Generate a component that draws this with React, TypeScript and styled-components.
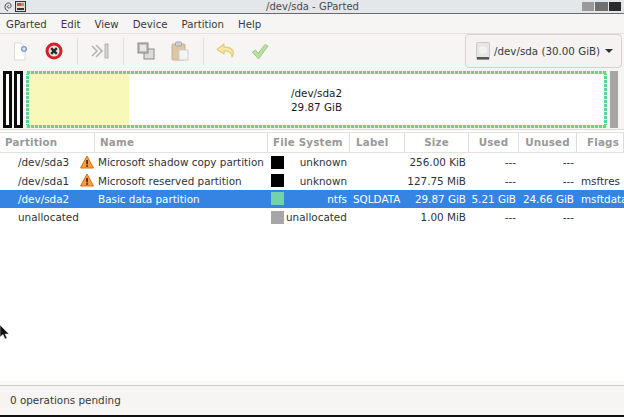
import React from "react";
import styled, { createGlobalStyle } from "styled-components";

const GlobalStyle = createGlobalStyle`
  html, body {
    margin: 0;
    padding: 0;
    background: #fff;
  }
  body {
    font-family: "DejaVu Sans", sans-serif;
    font-size: 10.4px;
    color: #2e3436;
  }
`;

const Win = styled.div`
  position: relative;
  width: 624px;
  height: 417px;
  display: flex;
  flex-direction: column;
  overflow: hidden;
  background: #fff;
  border-bottom: 2px solid #111;
  box-sizing: border-box;
`;

const TitleBar = styled.div`
  height: 13px;
  flex: none;
  display: flex;
  align-items: center;
  padding: 0 3px 0 4px;
  background: #e4e7ea;
  border-bottom: 1px solid #6b6b6b;
  font-size: 10px;
  color: #4a4a4a;
`;

const TitleIcons = styled.div`
  width: 100px;
  display: flex;
  align-items: center;
  gap: 3px;
`;

const Title = styled.div`
  flex: 1;
  text-align: center;
`;

const WinButtons = styled.div`
  width: 100px;
  display: flex;
  justify-content: flex-end;
  gap: 1px;
`;

const WinButton = styled.div<{ $c: string }>`
  width: 12.5px;
  height: 9px;
  background: ${(p) => p.$c};
`;

const MenuBar = styled.div`
  height: 18px;
  flex: none;
  display: flex;
  align-items: center;
  gap: 14px;
  padding: 1px 0 0 6px;
  background: #f6f5f4;
  border-bottom: 1px solid #e2dfdc;
  font-size: 10.2px;
  color: #3a3a3a;
`;

const Toolbar = styled.div`
  height: 34px;
  flex: none;
  display: flex;
  align-items: center;
  padding: 0 2px 0 3px;
  background: #f6f5f4;
  box-sizing: border-box;
`;

const Tool = styled.div`
  width: 34px;
  height: 26px;
  display: flex;
  align-items: center;
  justify-content: center;
`;

const ToolSep = styled.div`
  width: 1px;
  height: 27px;
  margin: 0 5.5px;
  background: #e0dedb;
`;

const DeviceButton = styled.div`
  margin-left: auto;
  width: 157px;
  height: 34px;
  box-sizing: border-box;
  display: flex;
  align-items: center;
  gap: 4px;
  padding-left: 10px;
  background: #f4f3f1;
  border: 1px solid #d5d2ce;
  border-radius: 4px;
  font-size: 10.3px;
  color: #3a3a3a;
  white-space: nowrap;
`;

const Caret = styled.div`
  width: 0;
  height: 0;
  margin-left: 1px;
  border-left: 4px solid transparent;
  border-right: 4px solid transparent;
  border-top: 4px solid #2e3436;
`;

const MapArea = styled.div`
  height: 62px;
  flex: none;
  box-sizing: border-box;
  display: flex;
  gap: 2px;
  padding: 3px 6px 1px 3px;
  background: #f6f5f4;
  border-bottom: 1px solid #dcd9d6;
`;

const TinyPart = styled.div`
  width: 9px;
  box-sizing: border-box;
  border: 3px solid #0c0c0c;
  background: #fff;
`;

const MainPart = styled.div`
  flex: 1;
  margin: 0 1px;
  padding: 3px;
  display: flex;
  background:
    repeating-linear-gradient(90deg, #f0efb0 0 1px, #5fcfaa 1px 4px) top / 100% 3px no-repeat,
    repeating-linear-gradient(90deg, #f0efb0 0 1px, #5fcfaa 1px 4px) bottom / 100% 3px no-repeat,
    repeating-linear-gradient(0deg, #f0efb0 0 1px, #5fcfaa 1px 4px) left / 3px 100% no-repeat,
    repeating-linear-gradient(0deg, #f0efb0 0 1px, #5fcfaa 1px 4px) right / 3px 100% no-repeat;
`;

const MainInner = styled.div<{ $used: number }>`
  flex: 1;
  display: flex;
  flex-direction: column;
  align-items: center;
  justify-content: center;
  line-height: 14px;
  color: #1c1c1c;
  background: linear-gradient(
    90deg,
    #f8f8b8 ${(p) => p.$used}px,
    #fff ${(p) => p.$used}px
  );
`;

const MapScroll = styled.div`
  width: 8px;
  background: #a6a6a6;
`;

const columns = "95px 173px 82px 55px 64px 50px 58px 47px";

const HeaderRow = styled.div`
  flex: none;
  height: 21px;
  margin-top: 2px;
  display: grid;
  grid-template-columns: ${columns};
  box-sizing: border-box;
  border-top: 1px solid #e4e1de;
  border-bottom: 1px solid #e4e1de;
`;

const HeaderCell = styled.div<{ $center?: boolean; $pad?: number }>`
  display: flex;
  align-items: center;
  justify-content: ${(p) => (p.$center ? "center" : "flex-start")};
  padding-left: ${(p) => (p.$center ? 0 : (p.$pad ?? 5))}px;
  padding-bottom: 2px;
  border-right: 1px solid #dedbd8;
  font-weight: bold;
  font-size: 10.3px;
  letter-spacing: 0.2px;
  color: #999;
  white-space: nowrap;
  overflow: hidden;
`;

const Row = styled.div<{ $selected?: boolean }>`
  flex: none;
  height: 18.35px;
  display: grid;
  grid-template-columns: ${columns};
  background: ${(p) => (p.$selected ? "#3584e4" : "#fff")};
  color: ${(p) => (p.$selected ? "#fff" : "#2e3436")};
`;

const Cell = styled.div<{ $right?: boolean; $pad?: number }>`
  display: flex;
  align-items: center;
  justify-content: ${(p) => (p.$right ? "flex-end" : "flex-start")};
  padding-left: ${(p) => (p.$right ? 0 : (p.$pad ?? 0))}px;
  padding-right: ${(p) => (p.$right ? (p.$pad ?? 0) : 0)}px;
  white-space: nowrap;
  overflow: hidden;
`;

const PartitionCell = styled(Cell)`
  position: relative;
  padding-left: 18px;
`;

const WarnSlot = styled.span`
  position: absolute;
  left: 80px;
  top: 2px;
  display: flex;
`;

const FsCell = styled(Cell)`
  padding-left: 3px;
  padding-right: 3px;
  gap: 2px;
`;

const Swatch = styled.div<{ $c: string }>`
  width: 13px;
  height: 13px;
  flex: none;
  background: ${(p) => p.$c};
`;

const FsName = styled.span<{ $left?: boolean }>`
  margin-left: ${(p) => (p.$left ? 0 : "auto")};
`;

const Filler = styled.div`
  flex: 1;
  background: #fff;
  border-bottom: 4px solid #f9f9f8;
`;

const StatusBar = styled.div`
  flex: none;
  height: 30px;
  box-sizing: border-box;
  display: flex;
  align-items: center;
  padding: 0 0 2px 10px;
  background: #f6f5f4;
  border-top: 1px solid #cfccc8;
  color: #3a3a3a;
`;

const Pointer = styled.svg`
  position: absolute;
  left: 0;
  top: 325px;
`;

const Warn = () => (
  <svg width="14" height="14" viewBox="0 0 14 14">
    <path d="M7 1 L13.5 13 H.5 Z" fill="#f5a03c" stroke="#d9701a" strokeLinejoin="round" />
    <rect x="6.2" y="5" width="1.7" height="4.4" fill="#3a3020" />
    <rect x="6.2" y="10.2" width="1.7" height="1.6" fill="#3a3020" />
  </svg>
);

type Part = {
  path: string;
  warn?: boolean;
  name: string;
  color: string;
  fs: string;
  label: string;
  size: string;
  used: string;
  unused: string;
  flags: string;
  selected?: boolean;
};

const parts: Part[] = [
  { path: "/dev/sda3", warn: true, name: "Microsoft shadow copy partition", color: "#000", fs: "unknown", label: "", size: "256.00 KiB", used: "---", unused: "---", flags: "" },
  { path: "/dev/sda1", warn: true, name: "Microsoft reserved partition", color: "#000", fs: "unknown", label: "", size: "127.75 MiB", used: "---", unused: "---", flags: "msftres" },
  { path: "/dev/sda2", name: "Basic data partition", color: "#72d2aa", fs: "ntfs", label: "SQLDATA", size: "29.87 GiB", used: "5.21 GiB", unused: "24.66 GiB", flags: "msftdata", selected: true },
  { path: "unallocated", name: "", color: "#a6a6a6", fs: "unallocated", label: "", size: "1.00 MiB", used: "---", unused: "---", flags: "" },
];

export default function App() {
  return (
    <Win>
      <GlobalStyle />
      <TitleBar>
        <TitleIcons>
          <svg width="8" height="10" viewBox="0 0 8 10">
            <path d="M4 9 C1.5 8 .8 6 1 4.5 C1.3 2 3 1 4.5 1 C6.5 1 7.5 2.8 7 4.5 C6.6 6 4.8 6.4 3.8 5.6 C3 4.8 3.4 3.6 4.6 3.6" fill="none" stroke="#444" strokeWidth="1" />
          </svg>
          <svg width="11" height="11" viewBox="0 0 11 11">
            <rect x=".5" y=".5" width="10" height="10" fill="#ddd" stroke="#333" />
            <rect x="2" y="2" width="4" height="3" fill="#d44" />
            <rect x="6" y="2" width="3" height="3" fill="#7b4" />
            <rect x="2" y="7" width="7" height="2" fill="#333" />
          </svg>
        </TitleIcons>
        <Title>/dev/sda - GParted</Title>
        <WinButtons>
          <WinButton $c="#9a9a9a" />
          <WinButton $c="#6f6f6f" />
          <WinButton $c="#2b2b2b" />
        </WinButtons>
      </TitleBar>

      <MenuBar>
        <span>GParted</span>
        <span>Edit</span>
        <span>View</span>
        <span>Device</span>
        <span>Partition</span>
        <span>Help</span>
      </MenuBar>

      <Toolbar>
        <Tool>
          <svg width="16" height="19" viewBox="0 0 16 19">
            <path d="M2.5 1 H9 L13 5 V18 H2.5 Z" fill="#fff" stroke="#dcdcdc" />
            <circle cx="12" cy="7" r="3" fill="#7d9fd6" />
            <path d="M10.4 7 H13.6 M12 5.4 V8.6" stroke="#fff" strokeWidth="1" />
          </svg>
        </Tool>
        <Tool>
          <svg width="18" height="18" viewBox="0 0 18 18">
            <circle cx="9" cy="9" r="7" fill="#e4e4e4" stroke="#d3202a" strokeWidth="3" />
            <path d="M6.2 6.2 L11.8 11.8 M11.8 6.2 L6.2 11.8" stroke="#2a2a2a" strokeWidth="2.4" />
          </svg>
        </Tool>
        <ToolSep />
        <Tool>
          <svg width="18" height="16" viewBox="0 0 18 16">
            <path d="M1 3 L6 8 L1 13 M5 2 L11 8 L5 14" fill="none" stroke="#b5b5b0" strokeWidth="1.6" />
            <rect x="14" y="1" width="3" height="14" fill="#d6d6d2" stroke="#a5a5a0" strokeWidth=".8" />
          </svg>
        </Tool>
        <ToolSep />
        <Tool>
          <svg width="18" height="18" viewBox="0 0 18 18">
            <rect x="7" y="7" width="10" height="10" fill="#dcdcda" stroke="#8a8a88" />
            <rect x="1" y="1" width="10" height="10" fill="#bdbdbb" stroke="#8a8a88" />
            <rect x="3" y="3" width="6" height="6" fill="#e8e8e6" />
          </svg>
        </Tool>
        <Tool>
          <svg width="18" height="20" viewBox="0 0 18 20">
            <rect x="1" y="3" width="13" height="16" rx="1" fill="#dcc6a6" stroke="#c8b090" />
            <rect x="4.5" y="1" width="6" height="4" rx="1" fill="#d0d0ce" stroke="#aaa" />
            <rect x="8" y="9" width="9" height="10" fill="#f4f4f2" stroke="#cfcfcd" />
          </svg>
        </Tool>
        <ToolSep />
        <Tool>
          <svg width="20" height="16" viewBox="0 0 20 16">
            <path d="M8 1 L1 6.5 L8 11 V8 C12 7.5 15.5 9 16 14 C19 9 17 4 8 4.2 Z" fill="#f5e7a5" stroke="#e0cc78" strokeWidth="1.2" strokeLinejoin="round" />
          </svg>
        </Tool>
        <Tool>
          <svg width="18" height="17" viewBox="0 0 18 17">
            <path d="M1.5 9 L4.5 7 L7 10.5 L14 1.5 L17 3 L7.5 16 Z" fill="#b9e0a0" stroke="#9ccb82" strokeWidth="1" strokeLinejoin="round" />
          </svg>
        </Tool>
        <DeviceButton>
          <svg width="14" height="18" viewBox="0 0 14 18">
            <rect x=".5" y=".5" width="13" height="17" rx="1" fill="#e6e6e4" stroke="#c9c9c7" />
            <circle cx="7" cy="8" r="4" fill="#f2f2f0" />
            <rect x="1" y="15" width="12" height="2.5" fill="#555" />
          </svg>
          <span>/dev/sda (30.00 GiB)</span>
          <Caret />
        </DeviceButton>
      </Toolbar>

      <MapArea>
        <TinyPart />
        <TinyPart />
        <MainPart>
          <MainInner $used={100}>
            <div>/dev/sda2</div>
            <div>29.87 GiB</div>
          </MainInner>
        </MainPart>
        <MapScroll />
      </MapArea>

      <HeaderRow>
        <HeaderCell>Partition</HeaderCell>
        <HeaderCell>Name</HeaderCell>
        <HeaderCell>File System</HeaderCell>
        <HeaderCell $pad={6}>Label</HeaderCell>
        <HeaderCell $center>Size</HeaderCell>
        <HeaderCell $center>Used</HeaderCell>
        <HeaderCell $center>Unused</HeaderCell>
        <HeaderCell $pad={10}>Flags</HeaderCell>
      </HeaderRow>

      {parts.map((p) => (
        <Row key={p.path} $selected={p.selected}>
          <PartitionCell>
            {p.path}
            {p.warn && (
              <WarnSlot>
                <Warn />
              </WarnSlot>
            )}
          </PartitionCell>
          <Cell $pad={3}>{p.name}</Cell>
          <FsCell>
            <Swatch $c={p.color} />
            <FsName $left={p.fs === "unallocated"}>{p.fs}</FsName>
          </FsCell>
          <Cell $pad={3}>{p.label}</Cell>
          <Cell $right $pad={3}>{p.size}</Cell>
          <Cell $right $pad={3}>{p.used}</Cell>
          <Cell $right $pad={3}>{p.unused}</Cell>
          <Cell $pad={4}>{p.flags}</Cell>
        </Row>
      ))}
      <Filler />

      <StatusBar>0 operations pending</StatusBar>

      <Pointer width="10" height="16" viewBox="0 0 10 16">
        <path d="M0 0 V12 L3 9.5 L5 14 L7 13 L5 9 H9 Z" fill="#111" stroke="#eee" strokeWidth=".5" />
      </Pointer>
    </Win>
  );
}
